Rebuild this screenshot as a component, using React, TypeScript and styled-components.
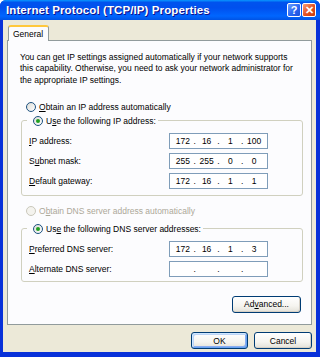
import React from 'react';
import styled, { createGlobalStyle } from 'styled-components';

const GlobalStyle = createGlobalStyle`
    html, body {
        margin: 0;
        padding: 0;
        background: #ffffff;
    }
    * {
        box-sizing: border-box;
    }
`;

const Window = styled.div`
    width: 320px;
    height: 357px;
    display: flex;
    flex-direction: column;
    background: #0831d9;
    border-radius: 6px 6px 0 0;
    overflow: hidden;
    font-family: 'Liberation Sans', Arial, sans-serif;
    font-size: 8.5px;
    color: #000;
`;

const TitleBar = styled.div`
    height: 20px;
    flex: none;
    display: flex;
    align-items: center;
    padding: 0 4px 0 6px;
    background: linear-gradient(180deg, #0997ff 0%, #0053ee 12%, #0050ee 40%, #0066ff 80%, #0053e5 100%);
`;

const Title = styled.div`
    flex: 1;
    color: #fff;
    font-weight: bold;
    font-size: 11.5px;
    letter-spacing: 0.1px;
    text-shadow: 1px 1px 0 #0f1089;
`;

const TitleButton = styled.div<{ $close?: boolean }>`
    width: 14px;
    height: 14px;
    margin-left: 1px;
    border: 1px solid #fff;
    border-radius: 2px;
    display: flex;
    align-items: center;
    justify-content: center;
    background: ${(p) => (p.$close
        ? 'linear-gradient(135deg, #f5a07a 0%, #e24f1f 55%, #c43e11 100%)'
        : 'linear-gradient(135deg, #6fa1ff 0%, #2a67f2 55%, #1d4fd8 100%)')};
    color: #fff;
    font-weight: bold;
    font-size: 11px;
    line-height: 1;
`;

const Frame = styled.div`
    flex: 1;
    display: flex;
    flex-direction: column;
    margin: 0 4px 5px 3px;
    background: #ece9d8;
    padding: 5px 4px 0 4px;
`;

const TabStrip = styled.div`
    display: flex;
    height: 15px;
    padding-left: 1px;
`;

const Tab = styled.div`
    width: 41px;
    height: 16px;
    background: #fcfcfe;
    border: 1px solid #919b9c;
    border-bottom: none;
    border-top: 2px solid #ffc83c;
    border-radius: 3px 3px 0 0;
    display: flex;
    align-items: center;
    padding-left: 4px;
    position: relative;
    z-index: 1;
`;

const Panel = styled.div`
    height: 285px;
    flex: none;
    background: #fcfcfe;
    border: 1px solid #919b9c;
    padding: 11px 9px 0 12px;
    display: flex;
    flex-direction: column;
`;

const Intro = styled.p`
    margin: 0;
    line-height: 11.3px;
    width: 280px;
`;

const Spacer = styled.div<{ $h: number }>`
    height: ${(p) => p.$h}px;
    flex: none;
`;

const RadioRow = styled.label<{ $disabled?: boolean }>`
    display: flex;
    align-items: center;
    gap: 3px;
    height: 14px;
    padding-left: 6px;
    color: ${(p) => (p.$disabled ? '#aca899' : '#000')};
`;

const RadioDot = styled.span<{ $checked?: boolean; $disabled?: boolean }>`
    width: 10px;
    height: 10px;
    border-radius: 50%;
    border: 1px solid ${(p) => (p.$disabled ? '#cac8bb' : '#1c5180')};
    background: ${(p) => (p.$disabled ? '#f4f3ee' : 'linear-gradient(135deg, #dcdcd7, #ffffff)')};
    display: flex;
    align-items: center;
    justify-content: center;
    &::after {
        content: '';
        display: ${(p) => (p.$checked ? 'block' : 'none')};
        width: 4px;
        height: 4px;
        border-radius: 50%;
        background: #21a121;
    }
`;

const Group = styled.fieldset<{ $height: number }>`
    margin: 0;
    flex: none;
    height: ${(p) => p.$height}px;
    border: 1px solid #d0d0bf;
    border-radius: 3px;
    padding: 5px 0 0 7px;
    display: flex;
    flex-direction: column;
    gap: 4px;
    width: 282px;
    margin-left: 1px;
`;

const Legend = styled.legend`
    padding: 0 2px 0 0;
    margin-left: -2px;
    background: #fcfcfe;
`;

const FieldRow = styled.div`
    display: flex;
    align-items: center;
    height: 16px;
`;

const FieldLabel = styled.span`
    width: 140px;
`;

const IpBox = styled.div`
    width: 99px;
    height: 16px;
    border: 1px solid #7f9db9;
    background: #fff;
    display: flex;
    align-items: center;
    padding: 0 3px;
`;

const Octet = styled.span`
    flex: 1;
    text-align: center;
`;

const Dot = styled.span`
    width: 4px;
    text-align: center;
`;

const Button = styled.button<{ $default?: boolean; $width: number }>`
    width: ${(p) => p.$width}px;
    height: 17px;
    padding: 0;
    font-family: inherit;
    font-size: 8.5px;
    color: #000;
    border: 1px solid #003c74;
    border-radius: 3px;
    background: linear-gradient(180deg, #ffffff 0%, #f5f4ef 60%, #e3e1d8 100%);
    box-shadow: ${(p) => (p.$default
        ? 'inset 1px 1px 0 #cee7ff, inset -1px -1px 0 #69a2f0, inset 2px 2px 0 #bcd4f6, inset -2px -2px 0 #89adf0'
        : 'inset -1px -1px 0 #d6d0c5')};
`;

const AdvancedRow = styled.div`
    display: flex;
    justify-content: flex-end;
    margin-top: 14px;
    padding-right: 1px;
`;

const Footer = styled.div`
    display: flex;
    justify-content: flex-end;
    gap: 6px;
    margin-top: 7px;
`;

const U = styled.span`
    text-decoration: underline;
`;

const fields = [
    { pre: '', key: 'I', post: 'P address:', value: ['172', '16', '1', '100'] },
    { pre: 'S', key: 'u', post: 'bnet mask:', value: ['255', '255', '0', '0'] },
    { pre: '', key: 'D', post: 'efault gateway:', value: ['172', '16', '1', '1'] },
];

const dns = [
    { pre: '', key: 'P', post: 'referred DNS server:', value: ['172', '16', '1', '3'] },
    { pre: '', key: 'A', post: 'lternate DNS server:', value: ['', '', '', ''] },
];

const IpField: React.FC<{ value: string[] }> = ({ value }) => (
    <IpBox>
        {value.map((v, i) => (
            <React.Fragment key={i}>
                {i > 0 && <Dot>.</Dot>}
                <Octet>{v}</Octet>
            </React.Fragment>
        ))}
    </IpBox>
);

const App: React.FC = () => {
    return (
        <>
            <GlobalStyle />
            <Window>
                <TitleBar>
                    <Title>Internet Protocol (TCP/IP) Properties</Title>
                    <TitleButton>?</TitleButton>
                    <TitleButton $close>✕</TitleButton>
                </TitleBar>
                <Frame>
                    <TabStrip>
                        <Tab>General</Tab>
                    </TabStrip>
                    <Panel>
                        <Intro>
                            You can get IP settings assigned automatically if your network supports
                            this capability. Otherwise, you need to ask your network administrator for
                            the appropriate IP settings.
                        </Intro>
                        <Spacer $h={14} />
                        <RadioRow>
                            <RadioDot />
                            <span><U>O</U>btain an IP address automatically</span>
                        </RadioRow>
                        <Group $height={82}>
                            <Legend>
                                <RadioRow as="span">
                                    <RadioDot $checked />
                                    <span>U<U>s</U>e the following IP address:</span>
                                </RadioRow>
                            </Legend>
                            {fields.map((f) => (
                                <FieldRow key={f.post}>
                                    <FieldLabel>{f.pre}<U>{f.key}</U>{f.post}</FieldLabel>
                                    <IpField value={f.value} />
                                </FieldRow>
                            ))}
                        </Group>
                        <Spacer $h={8} />
                        <RadioRow $disabled>
                            <RadioDot $disabled />
                            <span>O<U>b</U>tain DNS server address automatically</span>
                        </RadioRow>
                        <Spacer $h={4} />
                        <Group $height={60}>
                            <Legend>
                                <RadioRow as="span">
                                    <RadioDot $checked />
                                    <span>Us<U>e</U> the following DNS server addresses:</span>
                                </RadioRow>
                            </Legend>
                            {dns.map((f) => (
                                <FieldRow key={f.post}>
                                    <FieldLabel>{f.pre}<U>{f.key}</U>{f.post}</FieldLabel>
                                    <IpField value={f.value} />
                                </FieldRow>
                            ))}
                        </Group>
                        <AdvancedRow>
                            <Button $width={69}>Ad<U>v</U>anced...</Button>
                        </AdvancedRow>
                    </Panel>
                    <Footer>
                        <Button $default $width={57}>OK</Button>
                        <Button $width={58}>Cancel</Button>
                    </Footer>
                </Frame>
            </Window>
        </>
    );
};

export default App;
